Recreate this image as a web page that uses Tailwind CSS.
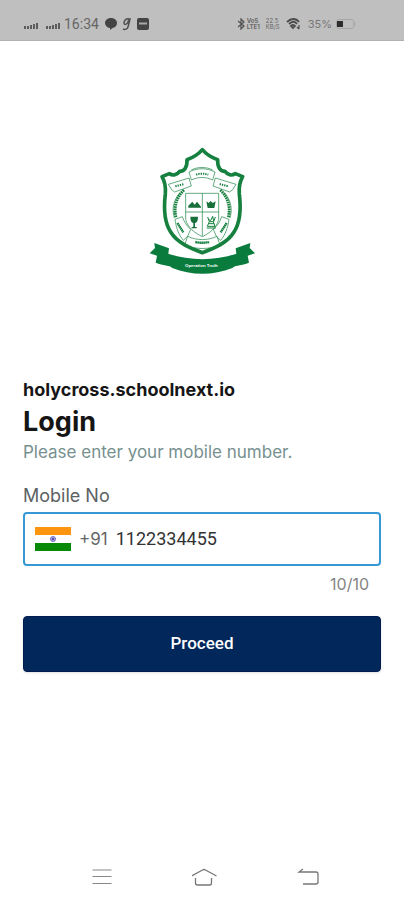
<!DOCTYPE html>
<html lang="en">
<head>
  <meta charset="UTF-8">
  <meta name="viewport" content="width=device-width, initial-scale=1.0">
  <title>Login</title>
  <script src="https://cdn.jsdelivr.net/npm/@tailwindcss/browser@4"></script>
</head>
<body class="bg-white font-['Inter',sans-serif] min-h-screen flex flex-col">
  <!-- Status bar -->
  <header class="h-10 bg-[#bfbfbf] border-b border-[#b0b0b0] box-content pl-6 pr-12 shrink-0">
    <div class="flex h-full items-end justify-between pb-2 text-[#686868]">
      <div class="flex items-center h-4">
        <svg class="w-4 h-4" viewBox="0 0 16 16" fill="#5c5c5c"><path d="M0 10h2v3H0zM3 10h2v3H3zM6 9h2v4H6zM9 8h2v5H9zM12 7h2v6h-2z"/></svg>
        <svg class="w-4 h-4 ml-1.5" viewBox="0 0 16 16" fill="#5c5c5c"><path d="M0 10h2v3H0zM3 10h2v3H3zM6 9h2v4H6zM9 8h2v5H9zM12 7h2v6h-2z"/></svg>
        <span class="ml-0.5 font-['Roboto',sans-serif] text-sm leading-4 text-[#666]">16:34</span>
        <svg class="w-3 h-3 ml-1.5" viewBox="0 0 12 12" fill="#444"><path d="M6 0c3.500 0 6 2.200 6 5s-2 4.800-4.500 5L5 12V10C2 9.600 0 7.700 0 5s2.500-5 6-5z"/></svg>
        <svg class="w-3 h-4 ml-1" viewBox="0 0 12 16" fill="none" stroke="#505050" stroke-width="1.500"><path d="M8 3C5 2 3 5 3 7s3 2 4-1l1-3h1L7 11c-.5 2-3 3-5 2"/></svg>
        <svg class="w-3 h-3 ml-1" viewBox="0 0 12 12"><rect width="12" height="12" rx="2" fill="#444"/><path d="M2 5.500h8" stroke="#aaa" stroke-width="2"/></svg>
      </div>
      <div class="flex items-center h-4">
        <svg class="w-2 h-3" viewBox="0 0 8 12" fill="none" stroke="#555" stroke-width="1.300"><path d="M1 3l6 5-3 3V1l3 3-6 5"/></svg>
        <span class="ml-0.5 text-[6px] leading-[6px] font-bold">Vo5<br>LTE1</span>
        <span class="ml-1.5 text-[6px] leading-[6px]">22.5<br>KB/S</span>
        <svg class="w-4 h-3 ml-1.5" viewBox="0 0 16 12" fill="none" stroke="#4c4c4c" stroke-width="1.800"><path d="M1 4c4-4 9-4 12 0M3 6c3-3 6-3 8 0M5 8c1.500-1.500 3-1.500 4 0l-2 2z"/><path d="M13 7v4M11 9l2 2" stroke-width="1.200"/></svg>
        <span class="ml-1.5 text-[11px] leading-4 text-[#777]">35%</span>
        <svg class="w-5 h-3 ml-1" viewBox="0 0 20 12"><rect x=".5" y="1.500" width="17" height="9" rx="2" fill="none" stroke="#a5a5a5"/><path d="M1 3h6v6H1z" fill="#2b2b2b"/><path d="M19 4v4" stroke="#a5a5a5"/></svg>
      </div>
    </div>
  </header>

  <main class="px-[23px] flex-1">
    <!-- School crest -->
    <svg class="w-[125px] h-[140px] mx-auto mt-[99px]" viewBox="0 0 375 420" role="img" aria-label="Holy Cross crest">
      <g fill="none" stroke="#16803f" stroke-linejoin="round">
        <path d="M187 29c-12 14-28 24-46 30 1 22-7 35-22 35-8 11-20 14-31 7l-22 9c8 14 12 30 10 52-5 42-5 82 16 114 20 33 60 49 95 62 35-13 75-29 95-62 21-32 21-72 16-114-2-22 2-38 10-52l-22-9c-11 7-23 4-31-7-15 0-23-13-22-35-18-6-34-16-46-30z" fill="#fff" stroke-width="11"/>
        <path d="M137 160h99v78c-5 25-27 41-49 52-22-11-45-27-50-52zM187 160v128M137 216h99" stroke-width="2"/>
        <path d="M132 150c-25 23-31 54-24 82M241 150c25 23 31 54 24 82" stroke-width="9" stroke-dasharray="5 2"/>
        <path d="M120 158c-20 22-25 49-17 76M253 158c20 22 25 49 17 76" stroke-width="2"/>
        <path d="M85 133l62-19 7 24-50 18-9-7zM288 133l-62-19-7 24 50 18 9-7zM147 96c24-13 54-13 78 0l-7 24c-20-10-44-10-64 0zM154 90c18-10 46-10 64 0" stroke-width="2"/>
        <path d="M105 238l22-8c5 15 13 28 25 38l-9 21-13 12c-13-15-22-38-25-63zM267 238l-22-8c-5 15-13 28-25 38l9 21 13 12c13-15 22-38 25-63zM143 289c28 13 60 13 88 0l9 26c-35 14-71 14-106 0z" stroke-width="2"/>
        <path d="M112 249l18 28M260 249l-18 28M166 306c14 3 28 3 42 0" stroke-width="7" stroke-dasharray="5 1"/>
        <path d="M106 139l26-7M239 132l26 7M168 104c12-4 25-4 37 0" stroke-width="6" stroke-dasharray="4 3"/>
      </g>
      <g fill="#176f3a">
        <path d="M145 203v-6l12-12 7 9 7-9 12 15v3zM199 184l7 5 6-6 6 6 9-5-4 20h-20zM151 230h23c0 12-3 18-9 19v12h5v4h-15v-4h5v-12c-6-1-9-7-9-19z"/>
      </g>
      <path d="M203 231l5 14h13l5-14M204 237l8 5 6-13 3 14M208 245l-6 14h23l-5-14M200 264h27M207 251h15" fill="none" stroke="#16803f" stroke-width="3"/>
      <!-- Ribbon -->
      <path d="M43 309l44 16-2 16c62 22 142 22 204 0l-2-16 44-16-2 15 16 16-22 7 4 21c-30 11-43 7-50 16-57 23-123 23-180 0-7-9-20-5-50-16l4-21-22-7 16-16z" fill="#087b3d"/>
      <text x="184" y="382" text-anchor="middle" fill="#fff" font-family="Liberation Sans, sans-serif" font-size="13" font-weight="bold">Operation Truth</text>
    </svg>

    <form class="mt-[98px]">
      <p class="text-lg leading-6 font-bold text-[#151515]">holycross.schoolnext.io</p>
      <h1 class="mt-1 text-[27px] leading-8 font-bold text-[#151515]">Login</h1>
      <p class="mt-0.5 text-[17px] leading-6 text-[#76908f]">Please enter your mobile number.</p>

      <label for="mobile" class="block mt-4 text-lg leading-8 text-[#5b6264]">Mobile No</label>
      <div class="flex items-center h-[54px] border-2 border-[#3699d6] rounded px-2">
        <svg class="w-9 h-6 ml-0.5 shrink-0" viewBox="0 0 36 24"><path fill="#ff9410" d="M0 0h36v8H0z"/><path fill="#fff" d="M0 8h36v8H0z"/><path fill="#078a08" d="M0 16h36v8H0z"/><circle cx="18" cy="12" r="2.500" fill="#a9a4df" stroke="#7772c4"/><circle cx="18" cy="12" r="1" fill="#3f3a9c"/></svg>
        <span class="ml-2 text-[17px] leading-6 text-[#666]">+91</span>
        <input id="mobile" type="tel" maxlength="10" value="1122334455" class="ml-2 min-w-0 flex-1 font-['Roboto',sans-serif] text-lg leading-6 text-[#333] outline-none">
      </div>
      <p class="mt-1.5 pr-3 text-right text-base leading-6 text-[#858585]">10/10</p>
      <button type="submit" class="mt-5 w-full h-14 rounded bg-[#02285b] border border-[#011d50] shadow text-white font-['Roboto',sans-serif] text-[17px] font-medium">Proceed</button>
    </form>
  </main>

  <!-- Navigation bar -->
  <nav class="flex justify-between h-12 items-center pl-[90px] pr-[83px] shrink-0">
    <button type="button" aria-label="Recent apps">
      <svg class="w-6 h-6" viewBox="0 0 24 24" fill="none" stroke="#888" stroke-width="1.200"><path d="M2.500 6h19M2.500 12.500h19M2.500 19.500h19"/></svg>
    </button>
    <button type="button" aria-label="Home">
      <svg class="w-7 h-6" viewBox="0 0 28 24" fill="none" stroke="#777" stroke-width="1.300"><path d="M-.5 12l11-6q1.500-1 3 0l11 6M3.500 14v5q0 2 2 2h12q2 0 2-2v-5"/></svg>
    </button>
    <button type="button" aria-label="Back">
      <svg class="w-6 h-6" viewBox="0 0 24 24" fill="none" stroke="#777" stroke-width="1.300"><path d="M6 5L2 8h17q2 0 2 2v8q0 2-2 2H6"/></svg>
    </button>
  </nav>
</body>
</html>
